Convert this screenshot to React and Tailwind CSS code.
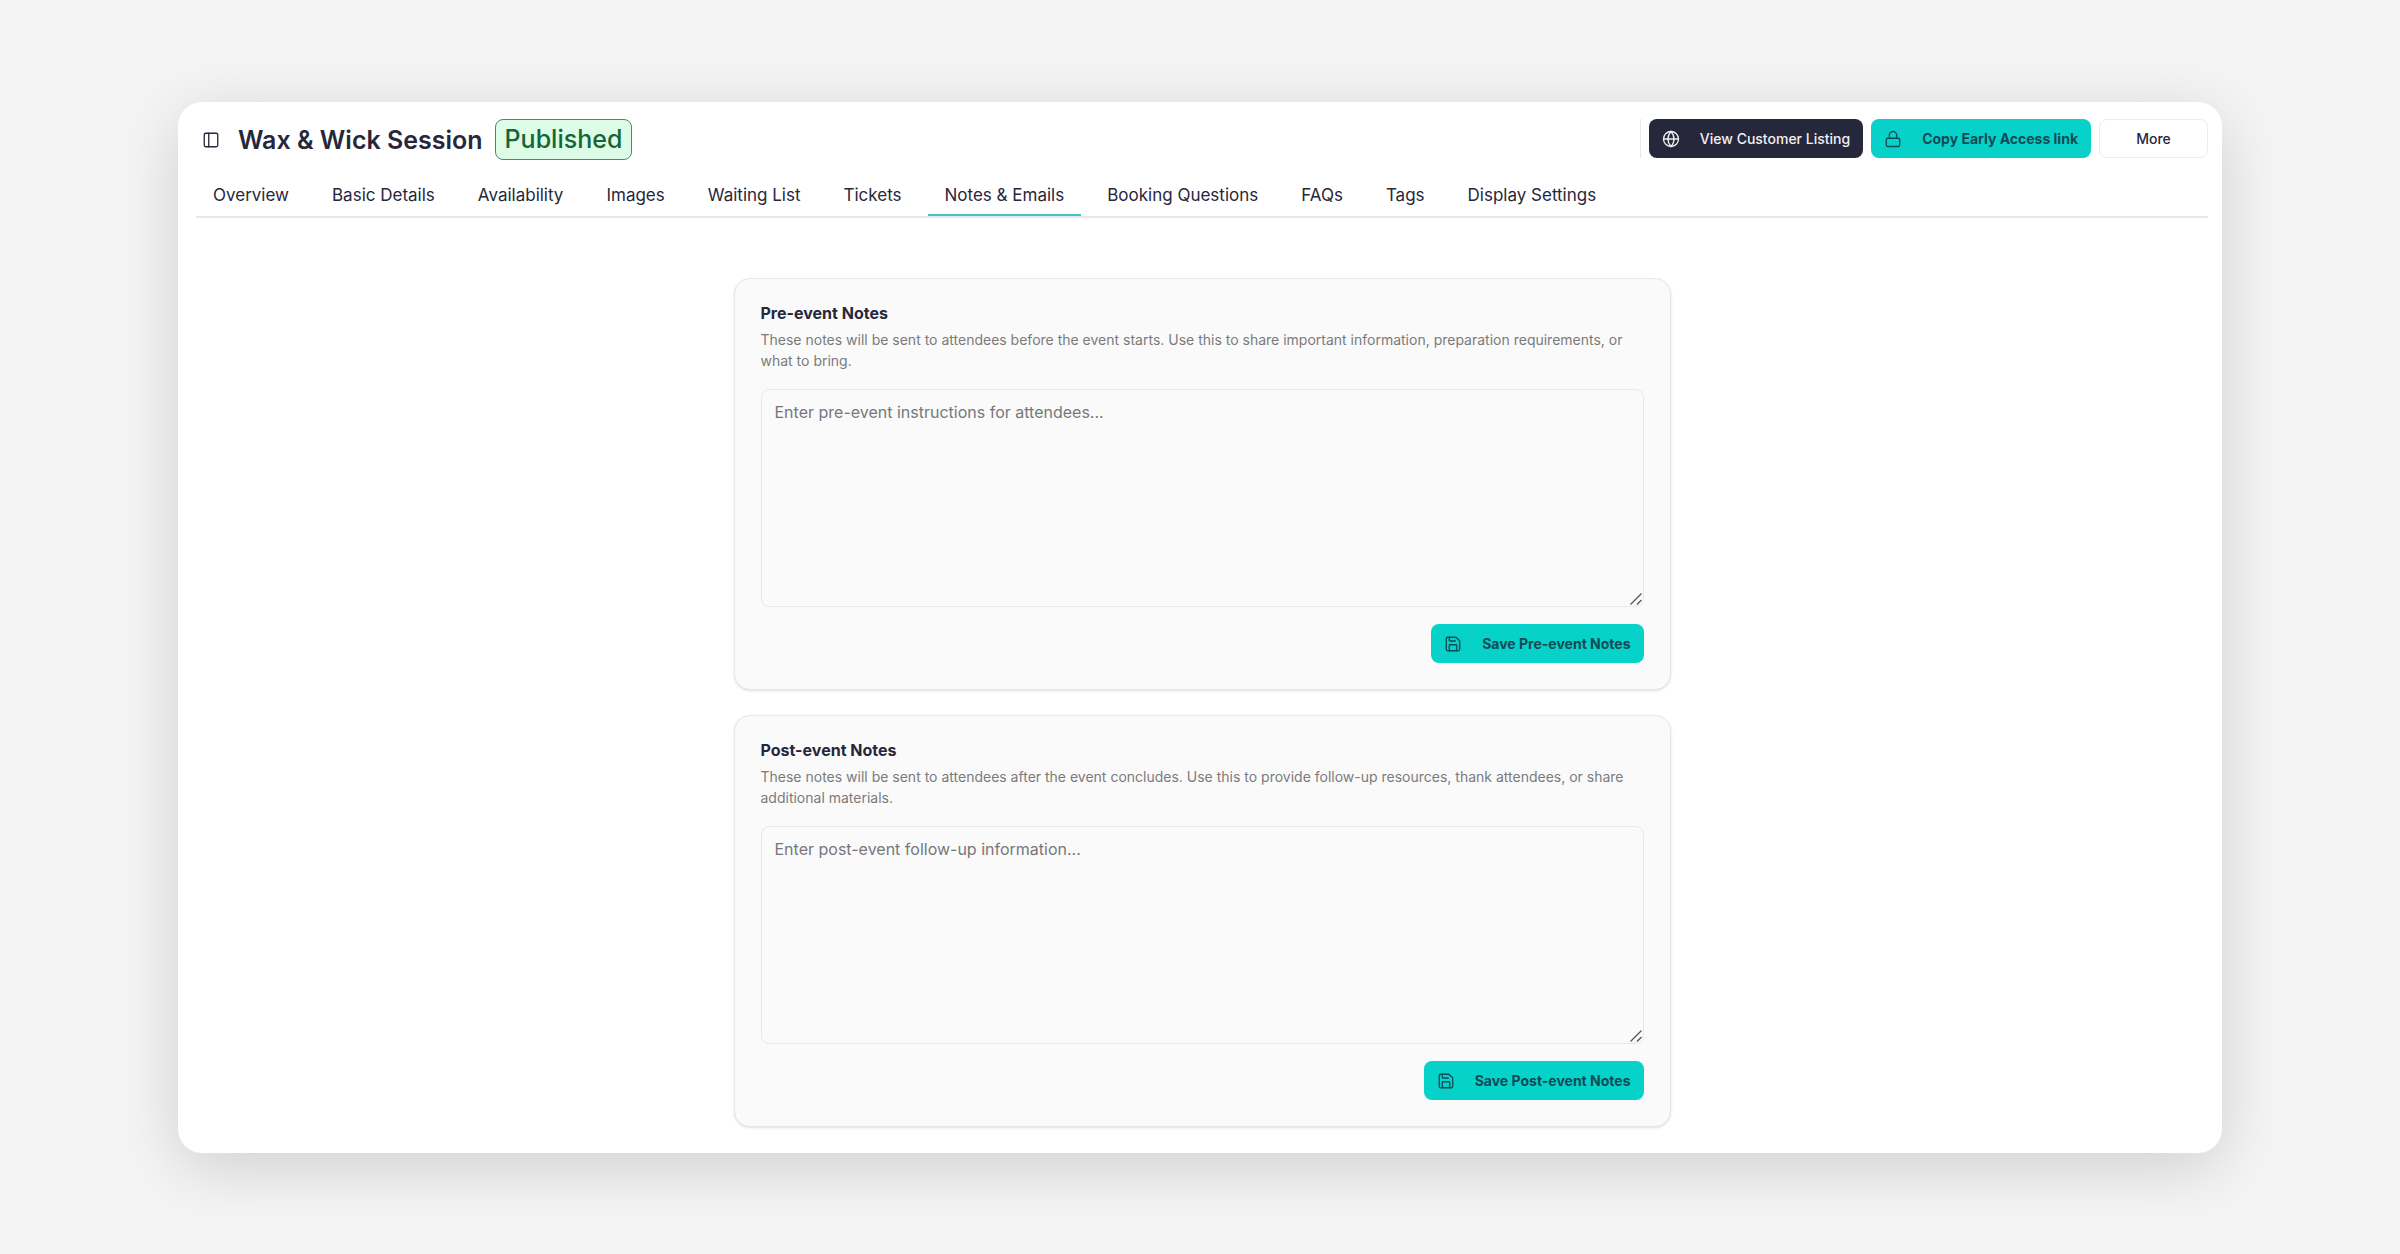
import React, { useState } from "react";
import { Globe, Lock, PanelLeft, Save } from "lucide-react";

const tabs = [
  "Overview",
  "Basic Details",
  "Availability",
  "Images",
  "Waiting List",
  "Tickets",
  "Notes & Emails",
  "Booking Questions",
  "FAQs",
  "Tags",
  "Display Settings",
];

const notes = [
  {
    id: "pre-event",
    title: "Pre-event Notes",
    description:
      "These notes will be sent to attendees before the event starts. Use this to share important information, preparation requirements, or what to bring.",
    placeholder: "Enter pre-event instructions for attendees...",
    button: "Save Pre-event Notes",
  },
  {
    id: "post-event",
    title: "Post-event Notes",
    description:
      "These notes will be sent to attendees after the event concludes. Use this to provide follow-up resources, thank attendees, or share additional materials.",
    placeholder: "Enter post-event follow-up information...",
    button: "Save Post-event Notes",
  },
];

function Header() {
  return (
    <header className="flex items-start justify-between">
      <div className="flex items-center pl-1.5">
        <button aria-label="Toggle sidebar" className="mr-[18px]">
          <PanelLeft size={18} strokeWidth={1.75} />
        </button>
        <h1 className="mr-3 text-[25px] leading-10 font-semibold">
          Wax &amp; Wick Session
        </h1>
        <span className="rounded-lg border border-[#5f8070] bg-[#dcfce7] px-[9px] text-[25px] leading-[39px] font-medium text-[#166534]">
          Published
        </span>
      </div>
      <div className="flex items-center gap-2 border-l border-gray-200 pl-2 text-[14px] leading-5">
        <button className="flex h-[39px] items-center gap-5 rounded-lg bg-[#27273b] px-[13px] font-medium text-[#f0f0f4]">
          <Globe size={18} strokeWidth={1.75} />
          View Customer Listing
        </button>
        <button className="flex h-[39px] items-center gap-5 rounded-lg bg-[#06d2c9] px-[13px] font-bold text-[#124a55]">
          <Lock size={18} strokeWidth={1.75} />
          Copy Early Access link
        </button>
        <button className="h-[39px] w-[109px] rounded-lg border border-[#ececee] font-medium">
          More
        </button>
      </div>
    </header>
  );
}

function NotesCard({ note }) {
  const [value, setValue] = useState("");
  return (
    <section className="rounded-2xl border border-[#e8e8ea] bg-[#fafafa] p-[26px] shadow-sm">
      <label
        htmlFor={note.id}
        className="block text-[16px] leading-4 font-bold"
      >
        {note.title}
      </label>
      <p className="mt-2 text-[14px] leading-[21px] text-[#7a7a7d]">
        {note.description}
      </p>
      <div className="relative mt-[18px]">
        <textarea
          id={note.id}
          value={value}
          onChange={(e) => setValue(e.target.value)}
          placeholder={note.placeholder}
          className="block h-[218px] w-full resize-none rounded-lg border border-[#e8e8ea] bg-[#fafafa] px-[13px] py-2.5 text-[16px] leading-6 placeholder:text-[#77777b]"
        />
        <svg
          className="pointer-events-none absolute right-0.5 bottom-0.5 size-3"
          viewBox="0 0 12 12"
          fill="none"
          stroke="#55555a"
          strokeWidth="1.25"
        >
          <path d="M0.5 11.5 11.5 0.5M7 11.5l4.5-4.5" />
        </svg>
      </div>
      <div className="mt-[17px] flex justify-end">
        <button className="flex h-[39px] items-center gap-5 rounded-lg bg-[#06d2c9] px-[13px] text-[14px] leading-5 font-bold text-[#124a55]">
          <Save size={18} strokeWidth={1.75} />
          {note.button}
        </button>
      </div>
    </section>
  );
}

export default function App() {
  const [active, setActive] = useState("Notes & Emails");
  return (
    <div className="min-h-screen bg-[#f4f4f4] px-[178px] pt-[102px] pb-[101px] font-['Inter',sans-serif] text-[#27273b]">
      <main className="rounded-3xl bg-white pt-[17px] pr-3.5 pb-[26px] pl-[18px] shadow-[0_14px_64px_rgba(0,0,0,0.15)]">
        <Header />
        <nav className="mt-4 flex gap-[9px] border-b-2 border-[#e8e8e8]">
          {tabs.map((tab) => (
            <button
              key={tab}
              onClick={() => setActive(tab)}
              className={`h-10 border-b-2 px-[17px] text-[17px] leading-6 ${
                tab === active ? "border-[#3fc6c2]" : "border-transparent"
              }`}
            >
              {tab}
            </button>
          ))}
        </nav>
        <div className="mx-auto mt-15 flex max-w-[937px] flex-col gap-[25px]">
          {notes.map((note) => (
            <NotesCard key={note.id} note={note} />
          ))}
        </div>
      </main>
    </div>
  );
}
